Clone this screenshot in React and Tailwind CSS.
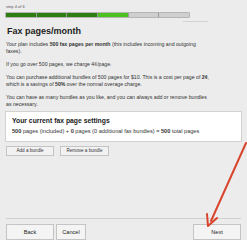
import React from "react";

export default function App() {
  const segs = ["bg-[#2e7d12]", "bg-[#2e7d12]", "bg-[#2e7d12]", "bg-[#4cc21e]", "bg-[#cfcfcf]", "bg-[#cfcfcf]"];
  return (
    <div className="relative w-[247px] h-[240px] overflow-hidden bg-[#ececec] text-[#333] flex flex-col" style={{ fontFamily: '"Liberation Sans", Arial, sans-serif' }}>
      <div className="pl-[6px] pt-[4px] text-[4px] leading-[5px] text-[#555]">step 4 of 6</div>
      <div className="ml-[5px] mt-[3px] flex w-[185px] h-[6px] border border-[#b5b5b5] rounded-[1px]">
        {segs.map((c, i) => (
          <div key={i} className={`flex-1 ${c} ${i > 0 ? "border-l border-[#9a9a9a]" : ""}`} />
        ))}
      </div>
      <div className="ml-[183px] mt-[3px] w-[25px] h-px bg-[#d4d4d4]" />
      <div className="pl-[7px] mt-[3px] text-[9px] leading-[12px] font-bold text-[#222]">Fax pages/month</div>
      <div className="pl-[6px] pr-[12px] mt-[4px] text-[5.2px] leading-[6.7px] flex flex-col gap-[6.5px]">
        <p>Your plan includes <b>500 fax pages per month</b> (this includes incoming and outgoing<br />faxes).</p>
        <p>If you go over 500 pages, we charge 4¢/page.</p>
        <p>You can purchase additional bundles of 500 pages for $10. This is a cost per page of <b>2¢</b>,<br />which is a savings of <b>50%</b> over the normal overage charge.</p>
        <p>You can have as many bundles as you like, and you can always add or remove bundles<br />as necessary.</p>
      </div>
      <div className="mx-[5px] mt-[4px] h-[31px] bg-white border border-[#d2d2d2] px-[6px] pt-[5px]">
        <div className="text-[6.8px] leading-[8px] font-bold text-[#222]">Your current fax page settings</div>
        <div className="mt-[3px] text-[5.6px] leading-[7px]"><b>500</b> pages (included) + <b>0</b> pages (0 additional fax bundles) = <b>500</b> total pages</div>
      </div>
      <div className="pl-[6px] mt-[4px] flex gap-[6px]">
        <div className="w-[48px] h-[10px] border border-[#c4c4c4] bg-[#f2f2f2] text-[4.6px] leading-[8px] text-center">Add a bundle</div>
        <div className="w-[49px] h-[10px] border border-[#c4c4c4] bg-[#f2f2f2] text-[4.6px] leading-[8px] text-center">Remove a bundle</div>
      </div>
      <div className="flex-1" />
      <div className="mx-[6px] h-px bg-[#d0d0d0]" />
      <div className="flex px-[6px] pt-[5px] gap-[2px]">
        <div className="w-[48px] h-[16px] border border-[#c4c4c4] bg-[#f4f4f4] text-[5.6px] leading-[14px] text-center text-[#222]">Back</div>
        <div className="w-[30px] h-[16px] border border-[#c4c4c4] bg-[#f4f4f4] text-[5.6px] leading-[14px] text-center text-[#222]">Cancel</div>
        <div className="flex-1" />
        <div className="w-[48px] h-[16px] border border-[#c4c4c4] bg-[#f4f4f4] text-[5.6px] leading-[14px] text-center text-[#222]">Next</div>
      </div>
      <svg className="absolute left-0 top-0 pointer-events-none" width="247" height="240" viewBox="0 0 247 240">
        <line x1="246" y1="143" x2="211" y2="221" stroke="#d8452c" strokeWidth="2" strokeLinecap="round" />
        <path d="M208 226 L207 214 M208 226 L217 218" stroke="#d8452c" strokeWidth="2" strokeLinecap="round" fill="none" />
      </svg>
    </div>
  );
}
